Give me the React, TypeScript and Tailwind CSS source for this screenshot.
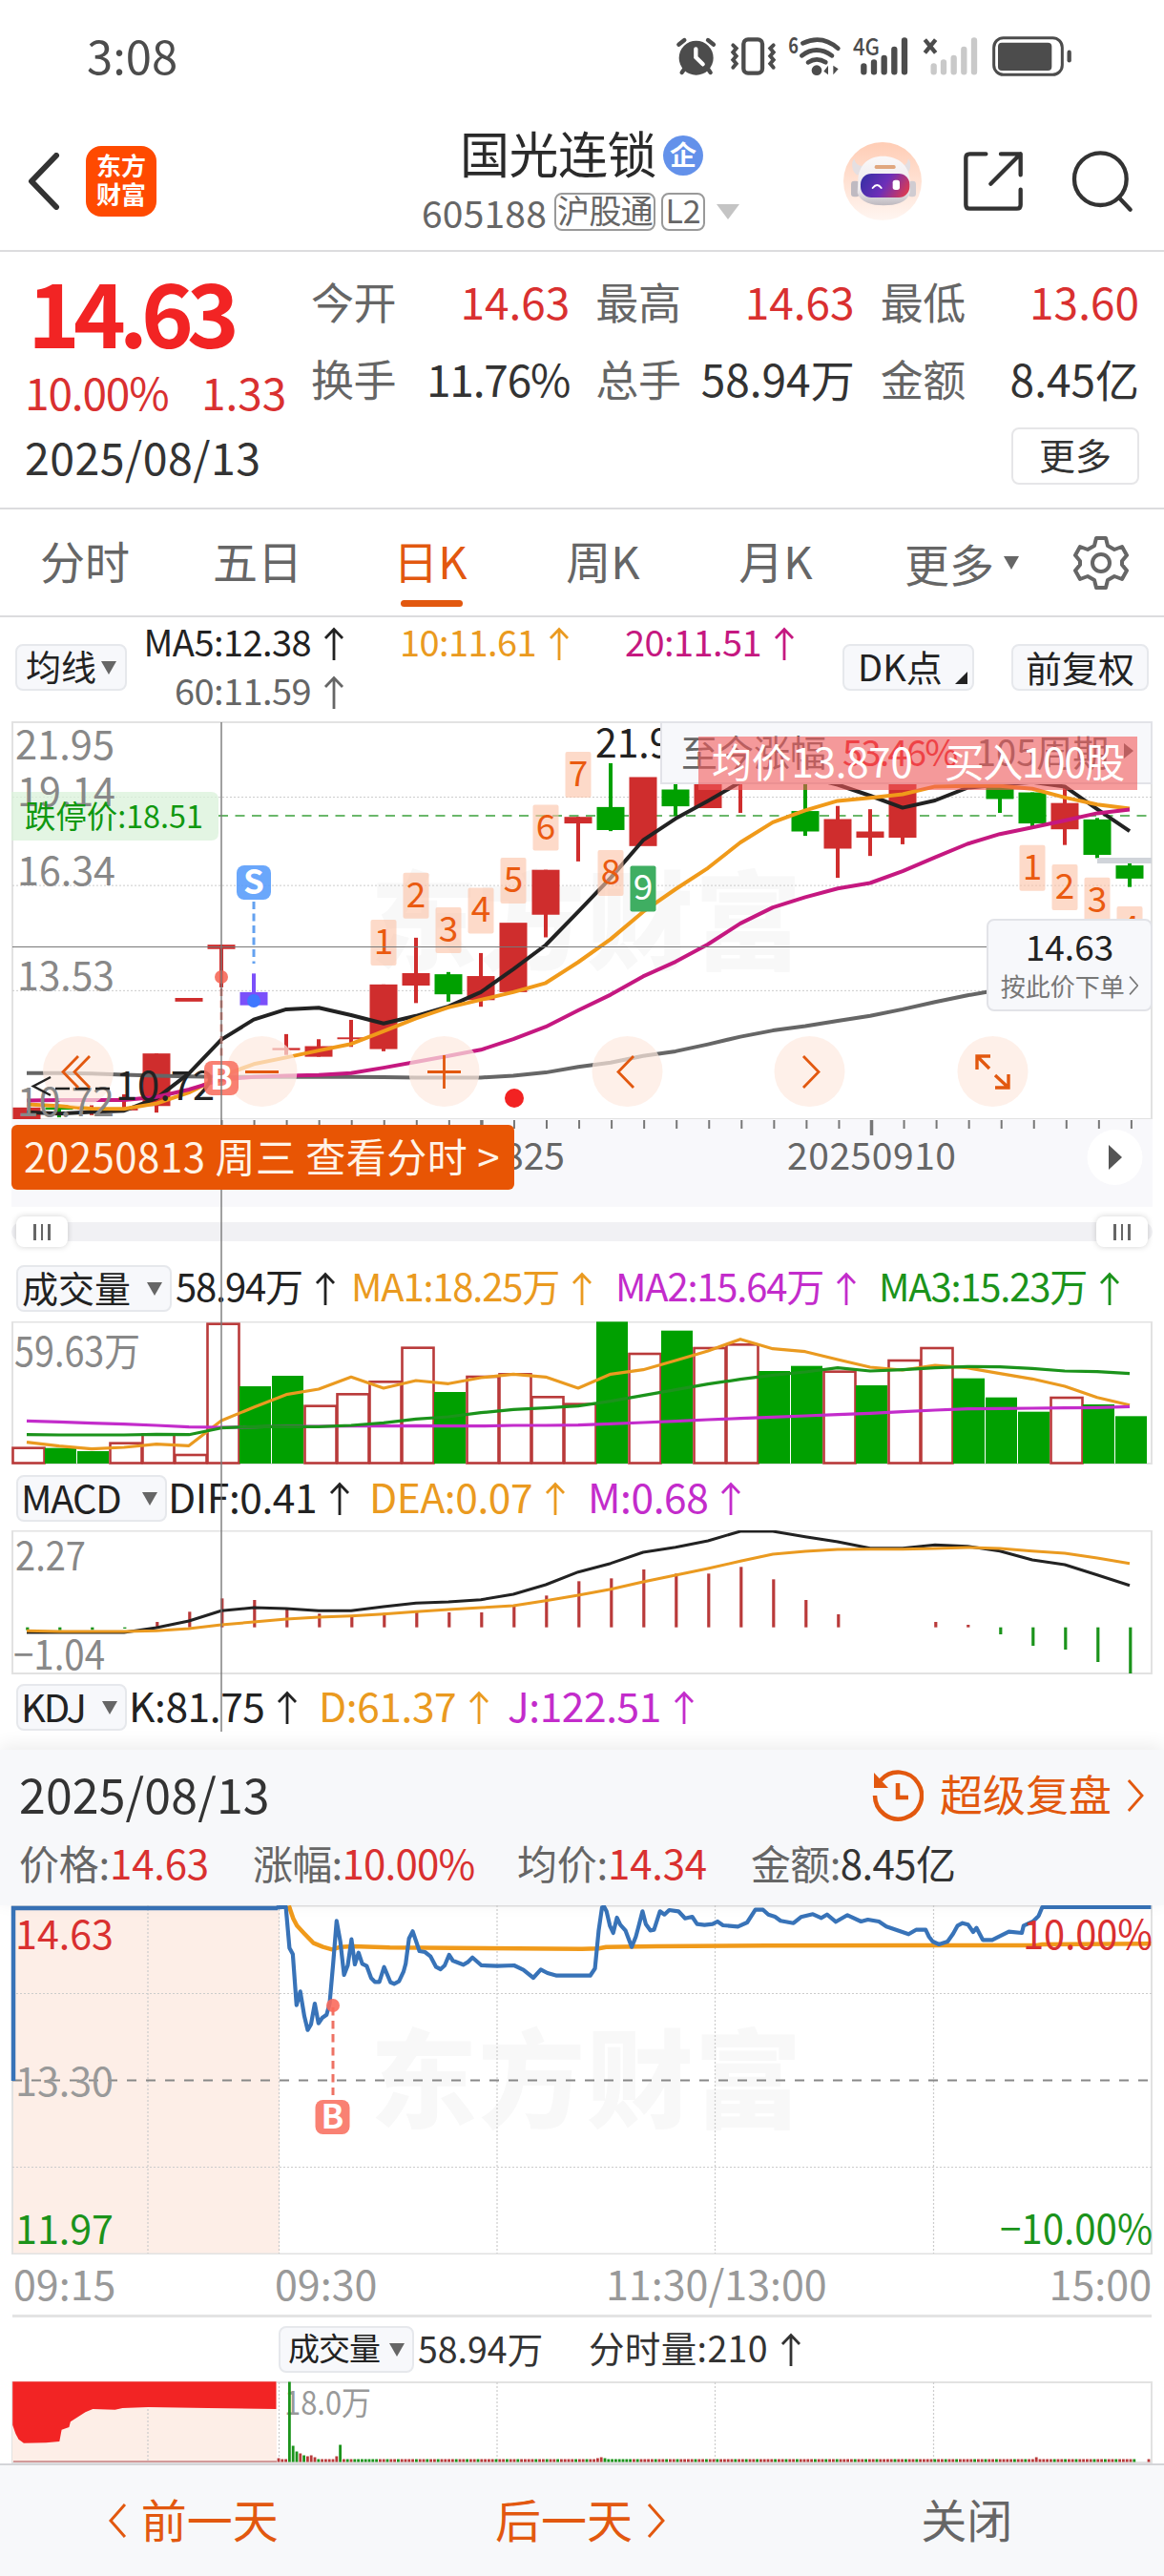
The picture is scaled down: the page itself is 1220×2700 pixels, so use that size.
import type { ReactNode } from "react";
import clsx from "clsx";

type Point = [number, number];

interface Candle {
  i: number;
  color: string;
  top: number;
  bottom: number;
  high?: number;
  low?: number;
}

const RED = "#cf2d2d";
const GREEN = "#00a000";
const UP = "#b93a3a";
const ORANGE = "#ea9a20";
const MAGENTA = "#c51880";
const PURPLE = "#c32ccb";
const ACCENT = "#e2580f";

const STEP = 34;
const slotX = (i: number) => 28 + i * STEP;

// price pane rows -> page pixels
const priceY = (v: number) => 640 + v / 2.6133;
// lower panes share one scale
const paneY = (v: number) => 1360 + v / 3;

const toPath = (points: Point[]) =>
  points
    .map(([x, y], n) => `${n ? "L" : "M"}${x.toFixed(1)} ${y.toFixed(1)}`)
    .join("");

const series = (values: number[], scale: (v: number) => number) =>
  toPath(values.map((v, i) => [slotX(i), scale(v)]));

const candles: Candle[] = [
  { i: 0, color: RED, top: 1361, bottom: 1393 },
  { i: 1, color: GREEN, top: 1361, bottom: 1367, high: 1361, low: 1388 },
  { i: 2, color: RED, top: 1362, bottom: 1367, high: 1355, low: 1382 },
  { i: 3, color: RED, top: 1364, bottom: 1369, high: 1325, low: 1370 },
  { i: 4, color: RED, top: 1213, bottom: 1357, high: 1213, low: 1375 },
  { i: 5, color: RED, top: 1061, bottom: 1071 },
  { i: 6, color: RED, top: 915, bottom: 927, high: 915, low: 1032 },
  { i: 7, color: "#7b50fa", top: 1045, bottom: 1081, high: 994, low: 1081 },
  { i: 8, color: RED, top: 1198, bottom: 1204, high: 1160, low: 1217 },
  { i: 9, color: RED, top: 1193, bottom: 1222, high: 1174, low: 1222 },
  { i: 10, color: RED, top: 1169, bottom: 1174, high: 1121, low: 1195 },
  { i: 11, color: RED, top: 1024, bottom: 1201, high: 1024, low: 1207 },
  { i: 12, color: RED, top: 993, bottom: 1027, high: 896, low: 1075 },
  { i: 13, color: GREEN, top: 996, bottom: 1051, high: 990, low: 1071 },
  { i: 14, color: RED, top: 1001, bottom: 1067, high: 938, low: 1085 },
  { i: 15, color: RED, top: 855, bottom: 1045 },
  { i: 16, color: RED, top: 710, bottom: 833, high: 710, low: 895 },
  { i: 17, color: RED, top: 565, bottom: 583, high: 565, low: 687 },
  { i: 18, color: GREEN, top: 538, bottom: 601, high: 418, low: 604 },
  { i: 19, color: RED, top: 456, bottom: 645 },
  { i: 20, color: GREEN, top: 490, bottom: 536, high: 440, low: 562 },
  { i: 21, color: RED, top: 440, bottom: 541 },
  { i: 22, color: RED, top: 400, bottom: 440, high: 390, low: 554 },
  { i: 24, color: GREEN, top: 549, bottom: 605, high: 440, low: 617 },
  { i: 25, color: RED, top: 571, bottom: 652, high: 535, low: 732 },
  { i: 26, color: RED, top: 605, bottom: 622, high: 544, low: 672 },
  { i: 27, color: RED, top: 440, bottom: 622, high: 440, low: 640 },
  { i: 30, color: GREEN, top: 460, bottom: 516, high: 440, low: 554 },
  { i: 31, color: GREEN, top: 498, bottom: 583, high: 498, low: 592 },
  { i: 32, color: RED, top: 527, bottom: 599, high: 480, low: 642 },
  { i: 33, color: GREEN, top: 572, bottom: 669, high: 568, low: 678 },
  { i: 34, color: GREEN, top: 698, bottom: 734, high: 692, low: 757 },
];

const ma5 = [
  1374, 1378, 1373, 1370, 1336, 1268, 1175, 1120, 1092, 1088, 1108, 1131, 1110,
  1084, 1045, 982, 916, 825, 732, 629, 570, 521, 470, 450, 455, 477, 507, 540,
  520, 485, 477, 470, 482, 544, 604,
];
const ma10 = [
  1352, 1357, 1364, 1365, 1350, 1320, 1275, 1242, 1224, 1205, 1187, 1152, 1117,
  1087, 1066, 1045, 1020, 963, 900, 825, 763, 705, 635, 580, 547, 521, 513, 503,
  482, 480, 480, 488, 512, 531, 542,
];
const ma20 = [
  1342, 1341, 1341, 1341, 1332, 1312, 1285, 1277, 1274, 1272, 1267, 1252, 1236,
  1220, 1203, 1174, 1140, 1095, 1052, 1002, 962, 914, 857, 813, 785, 761, 746,
  714, 676, 639, 612, 594, 575, 555, 545,
];
const ma60 = [
  1267, 1267, 1268, 1271, 1274, 1276, 1277, 1277, 1277, 1277, 1277, 1278, 1279,
  1279, 1279, 1274, 1265, 1250, 1238, 1220, 1207, 1188, 1167, 1150, 1138, 1124,
  1110, 1092, 1072, 1054, 1038,
];

const counts: { i: number; y: number; label: string; done?: boolean }[] = [
  { i: 11, y: 847, label: "1" },
  { i: 12, y: 718, label: "2" },
  { i: 13, y: 813, label: "3" },
  { i: 14, y: 759, label: "4" },
  { i: 15, y: 677, label: "5" },
  { i: 16, y: 532, label: "6" },
  { i: 17, y: 387, label: "7" },
  { i: 18, y: 656, label: "8" },
  { i: 19, y: 699, label: "9", done: true },
  { i: 31, y: 642, label: "1" },
  { i: 32, y: 695, label: "2" },
  { i: 33, y: 731, label: "3" },
  { i: 34, y: 810, label: "4" },
];

// negative = falling day
const volumes = [
  470, -473, -483, 455, 427, 492, 80, -279, -246, 338, 301, 262, 155, -297, 246,
  238, 310, 332, -76, 174, -104, 156, 145, -231, -215, 230, -276, 195, 156,
  -254, -314, -359, 312, -336, -373,
];
const volMa1 = [
  455, 467, 476, 471, 461, 466, 387, 345, 305, 288, 250, 285, 261, 271, 252,
  241, 250, 285, 241, 227, 198, 168, 131, 161, 170, 195, 219, 228, 213, 221,
  239, 256, 279, 314, 338,
];
const volMa2 = [
  388, 391, 395, 398, 402, 407, 408, 407, 405, 405, 404, 404, 403, 404, 404,
  402, 402, 401, 397, 393, 389, 384, 380, 376, 372, 368, 364, 359, 354, 350,
  349, 348, 347, 346, 343,
];
const volMa3 = [
  431, 432, 432, 432, 430, 431, 410, 406, 406, 406, 402, 394, 382, 375, 362,
  352, 347, 341, 326, 308, 290, 272, 257, 244, 234, 221, 231, 227, 221, 217,
  218, 223, 231, 233, 239,
];

const dif = [
  1053, 1053, 1053, 1053, 1038, 1017, 985, 975, 978, 985, 985, 972, 961, 957,
  950, 933, 903, 863, 836, 801, 785, 765, 735, 735, 752, 768, 788, 788, 778,
  782, 797, 825, 840, 872, 905,
];
const dea = [
  1048, 1050, 1050, 1050, 1048, 1041, 1029, 1020, 1011, 1005, 1001, 995, 988,
  981, 975, 969, 953, 936, 917, 894, 873, 852, 829, 807, 798, 792, 791, 791,
  789, 786, 789, 797, 804, 819, 836,
];
const macdBars = [
  1046, 1046, 1045, 1041, 1020, 988, 946, 951, 978, 994, 1004, 992, 985, 990,
  990, 972, 937, 892, 883, 855, 868, 868, 847, 886, 951, 996, 1037, 1037, 1020,
  1029, 1059, 1095, 1107, 1146, 1182,
];

const intraday = (points: Point[]) =>
  toPath(points.map(([x, y]) => [x / 2.5705, 1980 + y / 3]));

const intradayPrice: Point[] = [
  [745, 58], [770, 56], [780, 185], [789, 205], [799, 365], [809, 322],
  [820, 400], [829, 443], [838, 425], [848, 360], [858, 422], [868, 405],
  [880, 395], [888, 360], [898, 230], [907, 100], [917, 165], [927, 270],
  [937, 240], [947, 158], [956, 237], [966, 200], [976, 235], [988, 242],
  [1000, 280], [1010, 292], [1022, 292], [1035, 245], [1052, 293], [1062, 298],
  [1075, 290], [1087, 260], [1093, 235], [1102, 155], [1112, 133], [1130, 195],
  [1145, 198], [1160, 212], [1175, 245], [1187, 252], [1198, 240], [1210, 207],
  [1220, 225], [1248, 238], [1260, 230], [1273, 215], [1297, 240], [1340, 242],
  [1385, 240], [1410, 254], [1437, 279], [1457, 253], [1475, 264], [1500, 272],
  [1590, 272], [1603, 250], [1613, 130], [1622, 58], [1628, 56], [1634, 70],
  [1643, 115], [1652, 138], [1662, 90], [1671, 112], [1685, 130], [1702, 182],
  [1713, 150], [1720, 120], [1731, 70], [1740, 110], [1752, 130], [1762, 128],
  [1778, 70], [1790, 80], [1803, 66], [1828, 70], [1846, 92], [1865, 87],
  [1878, 110], [1898, 113], [1920, 110], [1933, 102], [1948, 114], [1988, 118],
  [2013, 105], [2035, 65], [2056, 65], [2070, 80], [2088, 87], [2103, 100],
  [2138, 107], [2158, 88], [2190, 79], [2213, 91], [2228, 80], [2252, 103],
  [2283, 82], [2320, 102], [2338, 96], [2368, 102], [2388, 118], [2448, 142],
  [2468, 128], [2494, 128], [2503, 150], [2513, 165], [2530, 174], [2553, 165],
  [2568, 140], [2580, 115], [2593, 107], [2608, 112], [2622, 135], [2631, 122],
  [2648, 160], [2673, 160], [2718, 134], [2753, 138], [2758, 115], [2783, 102],
  [2798, 85], [2808, 57], [3101, 57],
];
const intradayAvg: Point[] = [
  [778, 52], [790, 92], [800, 115], [820, 140], [845, 170], [870, 182],
  [895, 190], [917, 182], [950, 180], [1050, 184], [1568, 188], [1613, 187],
  [1633, 182], [1768, 180], [2068, 178], [2468, 177], [2793, 177], [2808, 174],
  [3101, 172],
];

const auction: Point[] = [
  [17, 409], [17, 545], [21, 572], [25, 590], [32, 602], [62, 601], [80, 597],
  [83, 560], [93, 552], [95, 535], [105, 520], [115, 505], [125, 495],
  [155, 497], [165, 492], [200, 489], [280, 492], [372, 495], [372, 409],
];

const ticks = Array.from({ length: 32 }, (_, n) => n);

// minute volume: the open is heavy, the rest of the day stays near the floor
const spikes: Record<number, [number, string]> = {
  0: [4, UP], 3: [84, "#1b931b"], 4: [17, "#1b931b"], 5: [11, "#1b931b"],
  6: [9, UP], 7: [7, "#1b931b"], 8: [6, UP], 9: [7, UP], 10: [5, UP],
  16: [6, UP], 17: [18, "#1b931b"], 88: [4, UP], 89: [5, UP], 90: [4, "#1b931b"],
  209: [5, UP],
};
const minutes = Array.from({ length: 241 }, (_, n) => {
  const green = (n > 20 && n < 28) || (n > 90 && n < 98) || (n * 7) % 11 < 3;
  const [h, color] = spikes[n] ?? [3, green ? "#1b931b" : UP];
  return { x: 292 + n * 3.8, h, color };
}).filter((_, n) => n < 237 || n === 240);

function Arrow() {
  return (
    <svg width="22" height="36" viewBox="0 0 22 36" className="ml-[13px] shrink-0">
      <path
        d="M11 35V2M2 12 11 2.5 20 12"
        fill="none"
        stroke="currentColor"
        strokeWidth="2.8"
      />
    </svg>
  );
}

function Chevron({ left = false, h = 36 }: { left?: boolean; h?: number }) {
  return (
    <svg width={h / 1.9} height={h} viewBox="0 0 19 36" className="shrink-0">
      <path
        d={left ? "M17 1 2 18 17 35" : "M2 1 17 18 2 35"}
        fill="none"
        stroke="currentColor"
        strokeWidth="3"
      />
    </svg>
  );
}

function Triangle({ className }: { className?: string }) {
  return (
    <svg width="16" height="14" viewBox="0 0 16 14" className={className}>
      <path d="M0 0H16L8 14Z" fill="currentColor" />
    </svg>
  );
}

function Tag({ className, children }: { className?: string; children: ReactNode }) {
  return (
    <div
      className={clsx(
        "flex h-[49px] shrink-0 items-center justify-between rounded-lg border-2 border-[#e6e8ec] bg-[#f7f8fb] leading-none text-[#222]",
        className
      )}
    >
      {children}
    </div>
  );
}

function Reading({ className, children }: { className?: string; children: ReactNode }) {
  return (
    <div className={clsx("flex shrink-0 items-center whitespace-nowrap", className)}>
      <span className="pb-1.5">{children}</span>
      <Arrow />
    </div>
  );
}

function StatusBar() {
  return (
    <div className="flex h-[118px] items-start justify-between text-[#4c4c4c]">
      <div className="pt-[32px] pl-[91px] text-[49px] leading-[50px]">3:08</div>
      <svg width="522" height="60" viewBox="0 0 1566 180" className="mt-6">
        <g fill="none" stroke="currentColor" strokeLinecap="round">
          <circle cx="95" cy="110" r="54" fill="currentColor" stroke="none" />
          <path d="M40 68 58 54M150 68 132 54M58 145 50 156M132 145 140 156" strokeWidth="13" />
          <path d="M94 82V108L116 130" stroke="#fff" strokeWidth="13" />
          <rect x="244" y="52" width="59" height="106" rx="14" strokeWidth="13" />
          <path
            d="M211 70 221 80 211 92 221 104 211 116 221 128 211 140M338 70 328 80 338 92 328 104 338 116 328 128 338 140"
            strokeWidth="12"
          />
          <path
            d="M430 64Q490 35 541 80M427 103Q473 68 522 103M447 124Q474 106 502 124"
            strokeWidth="14"
          />
          <circle cx="474" cy="149" r="16" fill="currentColor" stroke="none" />
          <path d="M510 134V163L496 152ZM526 134 542 145 526 163Z" fill="currentColor" stroke="none" />
          <path d="M622 136V154M654 124V154M686 111V154M718 84V154M750 55V154" strokeWidth="19" />
          <path
            d="M842 136V154M873 124V154M905 111V154M937 84V154M969 55V154"
            stroke="#c9c9c9"
            strokeWidth="19"
          />
          <path d="M814 53 848 94M848 53 814 94" strokeWidth="13" strokeLinecap="butt" />
          <rect x="1031" y="47" width="215" height="116" rx="30" strokeWidth="9" />
          <rect x="1044" y="62" width="169" height="88" rx="12" fill="currentColor" stroke="none" />
          <path d="M1268 92V118" strokeWidth="13" />
        </g>
        <text x="385" y="96" fontSize="68" fontWeight="700" fill="currentColor" textLength="32" lengthAdjust="spacingAndGlyphs">
          6
        </text>
        <text x="588" y="103" fontSize="74" fontWeight="500" fill="currentColor" textLength="84" lengthAdjust="spacingAndGlyphs">
          4G
        </text>
      </svg>
    </div>
  );
}

function Header() {
  return (
    <div className="flex h-[146px] items-center border-b-2 border-[#dcdcde]">
      <svg width="34" height="60" viewBox="0 0 34 60" className="ml-[29px]">
        <path d="M30 3 4 30 30 57" fill="none" stroke="#333" strokeWidth="6" strokeLinecap="round" strokeLinejoin="round" />
      </svg>
      <div className="ml-[27px] flex h-[74px] w-[74px] flex-col items-center justify-center rounded-2xl bg-[#ff4a00] pb-1 text-[26px] leading-[30px] font-bold text-white">
        <span>东方</span>
        <span>财富</span>
      </div>
      <div className="ml-[278px] flex w-[337px] flex-col">
        <div className="flex items-center pl-[40px]">
          <span className="text-[52px] leading-[60px] tracking-[-0.01em] text-[#2a2a2a]">国光连锁</span>
          <span className="mt-1.5 ml-[7px] flex h-[42px] w-[42px] items-center justify-center rounded-full bg-[#6391ea] pb-1 text-[28px] leading-none font-bold text-white">
            企
          </span>
        </div>
        <div className="mt-1 flex items-center text-[#666]">
          <span className="text-[39px] leading-[56px] tracking-[0.005em]">605188</span>
          <span className="ml-2 flex h-10 w-[106px] items-center justify-center rounded-lg border-2 border-[#999] pb-1 text-[34px] leading-none tracking-[-0.02em]">
            沪股通
          </span>
          <span className="ml-1.5 flex h-10 w-[46px] items-center justify-center rounded-lg border-2 border-[#999] pb-1 text-[34px] leading-none">
            L2
          </span>
          <svg width="24" height="16" viewBox="0 0 24 16" className="ml-3">
            <path d="M0 0H24L12 16Z" fill="#c4c4c4" />
          </svg>
        </div>
      </div>
      <svg width="82" height="82" viewBox="0 0 246 246" className="ml-[105px]">
        <defs>
          <linearGradient id="halo" x1="0" y1="0" x2="0" y2="1">
            <stop offset="0" stopColor="#ffcdb5" />
            <stop offset="1" stopColor="#fff6f1" />
          </linearGradient>
          <linearGradient id="shell" x1="0" y1="0" x2="0" y2="1">
            <stop offset="0" stopColor="#faf8f9" />
            <stop offset="0.7" stopColor="#ece9ec" />
            <stop offset="1" stopColor="#bdb8be" />
          </linearGradient>
          <linearGradient id="visor" x1="0" y1="0.3" x2="1" y2="0.6">
            <stop offset="0" stopColor="#3a2fa6" />
            <stop offset="0.5" stopColor="#6d2fb8" />
            <stop offset="1" stopColor="#d83a55" />
          </linearGradient>
        </defs>
        <circle cx="123" cy="123" r="123" fill="url(#halo)" />
        <rect x="24" y="122" width="26" height="50" rx="10" fill="#bfbac1" />
        <rect x="204" y="122" width="24" height="50" rx="10" fill="#d0ccd1" />
        <path d="M28 62Q24 92 44 104L70 74Q40 80 34 52ZM210 62Q214 92 194 104L172 74Q200 80 204 52Z" fill="#e4dfe2" />
        <path d="M124 44C76 44 48 74 46 118L44 160C54 190 90 199 126 199C166 199 200 190 209 160V118C206 72 172 44 124 44Z" fill="url(#shell)" />
        <rect x="54" y="99" width="154" height="75" rx="34" fill="url(#visor)" />
        <rect x="98" y="72" width="66" height="12" rx="5" fill="#e0a77f" />
        <path d="M92 144Q106 126 119 144" fill="none" stroke="#fff" strokeWidth="6" strokeLinecap="round" />
        <rect x="155" y="119" width="22" height="31" rx="8" fill="#fff" />
      </svg>
      <svg width="64" height="64" viewBox="0 0 192 192" className="ml-[43px]">
        <g fill="none" stroke="#333" strokeWidth="13" strokeLinecap="round" strokeLinejoin="round">
          <path d="M73 10H22Q10 10 10 22V170Q10 182 22 182H170Q182 182 182 170V122" />
          <path d="M120 10H182V76M182 10 88 104" />
        </g>
      </svg>
      <svg width="66" height="66" viewBox="0 0 198 198" className="ml-[49px]">
        <g fill="none" stroke="#333" strokeWidth="13" strokeLinecap="round">
          <circle cx="94" cy="92" r="82" />
          <path d="M152 150 188 188" />
        </g>
      </svg>
    </div>
  );
}

const quoteCells = [
  { label: "今开", value: "14.63", red: true },
  { label: "最高", value: "14.63", red: true },
  { label: "最低", value: "13.60", red: true },
  { label: "换手", value: "11.76%" },
  { label: "总手", value: "58.94万" },
  { label: "金额", value: "8.45亿" },
];

function Quote() {
  return (
    <div className="h-[270px] border-b-2 border-[#dcdcde]">
      <div className="flex h-[178px]">
        <div className="w-[326px] shrink-0 pl-[29px]">
          <div className="mt-[13px] text-[93px] leading-[96px] font-bold tracking-[-0.075em] text-[#f22424]">
            14.63
          </div>
          <div className="-ml-[3px] mt-[10px] flex text-[46px] leading-[54px] tracking-[-0.025em] text-[#d93030]">
            <span className="w-[185px]">10.00%</span>
            <span className="tracking-normal">1.33</span>
          </div>
        </div>
        <div className="grid h-[162px] w-[868px] grid-cols-3 gap-x-[27px] pt-[11px] leading-[81px]">
          {quoteCells.map((c) => (
            <div key={c.label} className="flex justify-between whitespace-nowrap">
              <span className="text-[45px] tracking-[-0.01em] text-[#666]">{c.label}</span>
              <span
                className={clsx(
                  "text-[46px]",
                  c.red ? "text-[#d93030]" : "text-[#333]",
                  c.value.endsWith("%") && "tracking-[-0.025em]"
                )}
              >
                {c.value}
              </span>
            </div>
          ))}
        </div>
      </div>
      <div className="flex items-center justify-between pr-[26px] pl-[26px]">
        <span className="text-[46.5px] leading-[72px] tracking-[0.01em] text-[#333]">2025/08/13</span>
        <span className="flex h-[60px] w-[134px] items-center justify-center rounded-lg border-2 border-[#e6e6e8] pb-1 text-[38px] leading-none text-[#333]">
          更多
        </span>
      </div>
    </div>
  );
}

function Tabs() {
  const tabs = ["分时", "五日", "日K", "周K", "月K"];
  return (
    <div className="flex h-[113px] items-center border-b-2 border-[#dcdcde] text-[47px] leading-none text-[#666]">
      {tabs.map((t) => (
        <div
          key={t}
          className={clsx(
            "flex h-full w-[181px] flex-col items-center justify-end",
            t === "日K" && "text-[#e2580f]"
          )}
        >
          <span className="pr-[3px]">{t}</span>
          <span
            className={clsx(
              "mt-[19px] mb-[9px] h-[7px] w-[65px] rounded-full",
              t === "日K" ? "bg-[#e2580f]" : "bg-transparent"
            )}
          />
        </div>
      ))}
      <span className="ml-[43px]">更多</span>
      <Triangle className="ml-2.5" />
      <svg width="58" height="58" viewBox="0 0 58 58" className="ml-[57px]">
        <g fill="none" stroke="#666" strokeWidth="4" strokeLinejoin="round">
          <path d="M24 3H34L36 11 43 15 51 12 56 21 51 27V31L56 37 51 46 43 43 36 47 34 55H24L22 47 15 43 7 46 2 37 7 31V27L2 21 7 12 15 15 22 11Z" />
          <circle cx="29" cy="29" r="9" />
        </g>
      </svg>
    </div>
  );
}

function MaRow() {
  return (
    <div className="flex h-[109px] text-[37px] leading-none">
      <Tag className="mt-[28px] ml-4 w-[117px] px-[9px]">
        <span className="pb-0.5">均线</span>
        <Triangle className="text-[#666]" />
      </Tag>
      <div className="-ml-[8px] grid h-[104px] w-[708px] grid-cols-3 grid-rows-2 pt-[3px] text-[38px] tracking-[-0.015em]">
        <Reading className="justify-end text-[#222]">MA5:12.38</Reading>
        <Reading className="justify-end text-[#ea9a20]">10:11.61</Reading>
        <Reading className="justify-end text-[#c51880]">20:11.51</Reading>
        <Reading className="justify-end text-[#666]">60:11.59</Reading>
      </div>
      <Tag className="mt-[28px] ml-[50px] w-[138px] items-end! pr-[5px] pl-[14px]">
        <span className="self-center pb-1 text-[38px]">DK点</span>
        <svg width="13" height="13" viewBox="0 0 13 13" className="mb-[5px]">
          <path d="M13 0V13H0Z" fill="#222" />
        </svg>
      </Tag>
      <Tag className="mt-[28px] ml-[39px] w-[144px] justify-center! pb-0.5 text-[38px]">前复权</Tag>
    </div>
  );
}

function Watermark({ y }: { y: number }) {
  return (
    <text x="388" y={y} fontSize="112" fontWeight="900" fill="#f8f8f8" textLength="452">
      东方财富
    </text>
  );
}

function TradeMark({ x, y, label, fill }: { x: number; y: number; label: string; fill: string }) {
  return (
    <g>
      <rect x={x - 18} y={y} width="36" height="36" rx="8" fill={fill} fillOpacity="0.88" />
      <text x={x} y={y + 30} fontSize="35" fontWeight="700" fill="#fff" textAnchor="middle">
        {label}
      </text>
    </g>
  );
}

function AxisText({ x, y, w, fill = "#888", children }: { x: number; y: number; w: number; fill?: string; children: string }) {
  return (
    <text x={x} y={y} fontSize="42" fill={fill} textLength={w} lengthAdjust="spacingAndGlyphs">
      {children}
    </text>
  );
}

function PriceChart() {
  return (
    <div className="relative h-[417px]">
      <svg width="1220" height="417" viewBox="0 756 1220 417" className="block">
        <Watermark y={1008} />
        <rect x="13" y="757" width="1194" height="416" fill="none" stroke="#e2e2e2" strokeWidth="2" />
        {[511, 753, 1041].map((v) => (
          <path key={v} d={`M13 ${priceY(v)}H1207`} stroke="#ccc" strokeWidth="1" strokeDasharray="2 2" />
        ))}
        <path d="M12 830H221Q229 830 229 838V873Q229 881 221 881H12Z" fill="#d9f1da" fillOpacity="0.75" />
        <AxisText x={16} y={796} w={104}>21.95</AxisText>
        <AxisText x={18} y={845} w={103}>19.14</AxisText>
        <AxisText x={18} y={928} w={103}>16.34</AxisText>
        <AxisText x={18} y={1038} w={102}>13.53</AxisText>
        <text x="26" y="868" fontSize="33" fill="#109810" textLength="187" lengthAdjust="spacingAndGlyphs">
          跌停价:18.51
        </text>
        <path d="M229 855H1207" stroke="#3aa03a" strokeWidth="1.5" strokeDasharray="10 7.5" />
        {candles.map((c) => {
          const x = slotX(c.i);
          return (
            <g key={c.i} fill={c.color}>
              <rect
                x={x - 14.5}
                y={priceY(c.top)}
                width="29"
                height={(c.bottom - c.top) / 2.6133}
              />
              {c.high !== undefined && c.low !== undefined && (
                <rect
                  x={x - 2}
                  y={priceY(c.high)}
                  width="4"
                  height={(c.low - c.high) / 2.6133}
                />
              )}
            </g>
          );
        })}
        <rect x="1150" y="899" width="57" height="6" fill="#d0d4da" />
        <g fill="none" strokeWidth="4" strokeLinejoin="round">
          <path d={series(ma60, priceY)} stroke="#666" />
          <path d={series(ma5, priceY)} stroke="#222" />
          <path d={series(ma10, priceY)} stroke="#f09a1a" />
          <path d={series(ma20, priceY)} stroke={MAGENTA} />
        </g>
        {counts.map((c) => (
          <g key={`${c.i}-${c.label}`}>
            <rect
              x={slotX(c.i) - 13.5}
              y={priceY(c.y)}
              width="27"
              height="48"
              rx="2"
              fill={c.done ? "#3fae62" : "#fbc3a8"}
              fillOpacity={c.done ? 1 : 0.62}
            />
            <text
              x={slotX(c.i)}
              y={priceY(c.y) + 36}
              fontSize="37"
              fill={c.done ? "#fff" : "#ea5a10"}
              textAnchor="middle"
            >
              {c.label}
            </text>
          </g>
        ))}
        <path d="M13 992.5H1035" stroke="#777" strokeWidth="1.2" />
        <path d="M266 945V1010" stroke="#64a2f0" strokeWidth="3" strokeDasharray="8 4.5" />
        <TradeMark x={266} y={907} label="S" fill="#559bfa" />
        <circle cx="266" cy="1049" r="7" fill="#3f78ff" />
        <circle cx="232" cy="1024" r="7" fill="#f5604f" fillOpacity="0.85" />
        <path d="M232 1036V1111" stroke="#dd5545" strokeWidth="2.5" strokeDasharray="8 4.5" />

        <g fill="#fdeadf" fillOpacity="0.7">
          {[82, 274.5, 465.5, 657.5, 848.5, 1040.5].map((cx) => (
            <circle key={cx} cx={cx} cy="1123" r="37" />
          ))}
        </g>
        <AxisText x={18} y={1170} w={102}>10.72</AxisText>
        <AxisText x={121} y={1153} w={104} fill="#222">10.72</AxisText>
        <path d="M53 1129 35 1138.5 53 1148M58 1141H73M79 1141H94M100 1141H115" fill="none" stroke="#222" strokeWidth="2.5" />
        <g fill="none" stroke={ACCENT} strokeWidth="2.8">
          <path d="M82 1107 66 1123.500 82 1140M94 1107 78 1123.500 94 1140" />
          <path d="M257 1123.500H292M448 1123.500H483M465.500 1106V1141" />
          <path d="M664 1107 648 1123.500 664 1140M842 1107 858 1123.500 842 1140" />
          <path d="M1038 1107H1024V1121M1024 1107 1037 1120M1043 1127 1057 1140M1057 1126V1140H1043" strokeWidth="3.4" />
        </g>
        <TradeMark x={232} y={1112} label="B" fill="#f87060" />
        <circle cx="539" cy="1151" r="10" fill="#f22222" />
        <AxisText x={624} y={794} w={102} fill="#222">21.95</AxisText>
      </svg>

      <div className="absolute top-0 left-[692px] flex h-[66px] w-[516px] items-center border-2 border-[#e2e3e8] bg-[#f7f8fb] pb-1 pl-5 text-[38px] leading-none whitespace-nowrap text-[#666]">
        <span className="w-[169px]">至今涨幅</span>
        <span className="w-[140px] tracking-[-0.045em] text-[#e8202a]">53.46%</span>
        <span>105周期</span>
        <span className="ml-4 border-y-8 border-l-[10px] border-y-transparent border-l-[#666]" />
      </div>
      <div className="absolute top-[16px] left-[732px] flex h-[56px] w-[460px] items-center justify-between bg-[#f25a5a]/60 px-[14px] pb-[7px] text-[42px] leading-none whitespace-nowrap text-white">
        <span className="tracking-[-0.005em]">均价13.870</span>
        <span className="tracking-[-0.03em]">买入100股</span>
      </div>
      <div className="absolute top-[207px] left-[1034px] flex h-[97px] w-[174px] flex-col items-center rounded-lg border-2 border-[#e2e3e8] bg-[#f7f8fb] pt-[4px]">
        <span className="text-[37px] leading-[44px] text-[#222]">14.63</span>
        <span className="flex items-center text-[26px] leading-[40px] whitespace-nowrap text-[#777]">
          按此价下单
          <span className="ml-1">
            <Chevron h={20} />
          </span>
        </span>
      </div>
    </div>
  );
}

function TimeAxis() {
  return (
    <div className="relative mx-3 h-[92px] bg-[#f8f8fb]">
      <svg width="1196" height="92" viewBox="12 1173 1196 92" className="block">
        {ticks.map((n) => {
          const strong = n === 8 || n === 20;
          return (
            <path
              key={n}
              d={`M${232.5 + n * 34.05} 1174V${n === 20 ? 1190 : 1183}`}
              stroke={n === 31 ? "#aaa" : "#777"}
              strokeWidth={strong ? 3.5 : 2}
            />
          );
        })}
        <text x="592" y="1226" fontSize="39" fill="#666" textAnchor="end">
          20250825
        </text>
        <text x="825" y="1226" fontSize="39" fill="#666" textLength="177">
          20250910
        </text>
        <circle cx="1168.500" cy="1213" r="29" fill="#fff" />
        <path d="M1162 1200V1226L1176 1213Z" fill="#555" />
      </svg>
      <div className="absolute top-[6px] left-0 flex h-[68px] w-[527px] items-center rounded-md bg-[#e85504] pb-1 pl-[13px] text-[42px] leading-none tracking-[0.012em] whitespace-pre text-[#fff3e6]">
        20250813 周三 查看分时 &gt;
      </div>
    </div>
  );
}

function Handle() {
  return (
    <div className="flex h-8 w-[54px] items-center justify-center gap-[5px] rounded-lg bg-white shadow-[0_0_6px_rgba(0,0,0,0.18)]">
      <span className="h-[17px] w-[2.5px] bg-[#666]" />
      <span className="h-[17px] w-[2.5px] bg-[#666]" />
      <span className="h-[17px] w-[2.5px] bg-[#666]" />
    </div>
  );
}

function RangeSlider() {
  return (
    <div className="flex h-[61px] items-center px-3 pb-[9px]">
      <div className="flex h-5 flex-1 items-center justify-between rounded-full bg-[#f1f1f4] px-[5px]">
        <Handle />
        <Handle />
      </div>
    </div>
  );
}

function VolumePane() {
  return (
    <>
      <div className="flex h-[59px] items-start text-[40px] leading-[43px] tracking-[-0.03em]">
        <Tag className="ml-[17px] w-[163px] pr-2 pl-[4px]">
          <span className="pb-1 text-[38px] tracking-normal">成交量</span>
          <Triangle className="text-[#666]" />
        </Tag>
        <Reading className="ml-1 w-[184px] text-[#222]">58.94万</Reading>
        <Reading className="w-[277px] text-[#ea9a20]">MA1:18.25万</Reading>
        <Reading className="w-[276px] text-[#c32ccb]">MA2:15.64万</Reading>
        <Reading className="text-[#1b931b]">MA3:15.23万</Reading>
      </div>
      <svg width="1220" height="150" viewBox="0 1385 1220 150" className="block">
        <rect x="13" y="1385.500" width="1194" height="148.500" fill="none" stroke="#e2e2e2" strokeWidth="2" />
        <AxisText x={15} y={1432} w={132}>59.63万</AxisText>
        {volumes.map((v, i) => {
          const x = slotX(i) - 15.5;
          const y = paneY(Math.abs(v));
          return v < 0 ? (
            <rect key={i} x={x + 0.5} y={y} width="33" height={1534 - y} fill={GREEN} />
          ) : (
            <rect key={i} x={x + 1} y={y + 1} width="33" height={1532.5 - y} fill="#fff" stroke={UP} strokeWidth="2.6" />
          );
        })}
        <g fill="none" strokeWidth="3.2" strokeLinejoin="round">
          <path d={series(volMa1, paneY)} stroke={ORANGE} />
          <path d={series(volMa2, paneY)} stroke={PURPLE} />
          <path d={series(volMa3, paneY)} stroke="#1b931b" />
        </g>
      </svg>
    </>
  );
}

function MacdPane() {
  return (
    <>
      <div className="flex h-[69px] items-start pt-[11px] text-[42.5px] leading-[43px] tracking-[-0.01em]">
        <Tag className="ml-[17px] w-[158px] pr-2 pl-[3px]">
          <span className="pb-1 text-[40px] tracking-[-0.03em]">MACD</span>
          <Triangle className="text-[#666]" />
        </Tag>
        <Reading className="ml-px w-[211px] text-[#222]">DIF:0.41</Reading>
        <Reading className="w-[229px] text-[#ea9a20]">DEA:0.07</Reading>
        <Reading className="text-[#c32ccb]">M:0.68</Reading>
      </div>
      <svg width="1220" height="151" viewBox="0 1604 1220 151" className="block">
        <rect x="13" y="1604.500" width="1194" height="149.500" fill="none" stroke="#e2e2e2" strokeWidth="2" />
        <AxisText x={16} y={1646} w={74}>2.27</AxisText>
        <AxisText x={14} y={1750} w={96}>−1.04</AxisText>
        {macdBars.map((v, i) => (
          <path
            key={i}
            d={`M${slotX(i) + 0.8} ${paneY(1037)}V${paneY(v)}`}
            stroke={v > 1037 ? "#1b931b" : UP}
            strokeWidth="3.2"
          />
        ))}
        <g fill="none" strokeWidth="3" strokeLinejoin="round">
          <path d={series(dif, paneY)} stroke="#222" />
          <path d={series(dea, paneY)} stroke={ORANGE} />
        </g>
      </svg>
    </>
  );
}

function KdjRow() {
  return (
    <div className="flex h-[79px] items-start pt-[10px] text-[42.5px] leading-[43px] tracking-[-0.01em]">
      <Tag className="ml-[17px] w-[116px] pr-2 pl-[3px]">
        <span className="pb-1 text-[40px] tracking-[-0.05em]">KDJ</span>
        <Triangle className="text-[#666]" />
      </Tag>
      <Reading className="ml-0.5 w-[199px] text-[#222]">K:81.75</Reading>
      <Reading className="w-[198px] text-[#ea9a20]">D:61.37</Reading>
      <Reading className="text-[#c32ccb]">J:122.51</Reading>
    </div>
  );
}

function ReplayHeader() {
  return (
    <div className="relative h-[163px] bg-[#f7f8fa] shadow-[0_-4px_18px_rgba(0,0,0,0.08)]">
      <div className="flex h-[96px] items-center justify-between pr-[21px] pl-[20px]">
        <span className="pb-1.5 text-[50px] leading-none tracking-[0.003em] text-[#333]">2025/08/13</span>
        <span className="flex items-center text-[45px] leading-none text-[#e2580f]">
          <svg width="54" height="54" viewBox="0 0 54 54" className="mr-[17px]">
            <path d="M3 27A24.500 24.500 0 1 0 9 11" fill="none" stroke="currentColor" strokeWidth="4.500" />
            <path d="M2 3V19H17Z" fill="currentColor" />
            <path d="M27 14V29H38" fill="none" stroke="currentColor" strokeWidth="4.500" />
          </svg>
          <span className="pb-[5px]">超级复盘</span>
          <span className="ml-4">
            <Chevron h={34} />
          </span>
        </span>
      </div>
      <div className="-mt-[2px] flex pl-[20px] text-[42px] leading-[48px] whitespace-nowrap text-[#666]">
        <span className="w-[245px] tracking-[-0.005em]">
          价格:<span className="text-[#d93030]">14.63</span>
        </span>
        <span className="w-[277px] tracking-[-0.018em]">
          涨幅:<span className="text-[#d93030]">10.00%</span>
        </span>
        <span className="w-[245px] tracking-[-0.005em]">
          均价:<span className="text-[#d93030]">14.34</span>
        </span>
        <span className="tracking-[-0.015em]">
          金额:<span className="text-[#333]">8.45亿</span>
        </span>
      </div>
    </div>
  );
}

function IntradayChart() {
  return (
    <svg width="1220" height="366" viewBox="0 1997 1220 366" className="block">
      <Watermark y={2222} />
      <rect x="13" y="1997" width="280" height="365" fill="#fdeee7" />
      <path d="M13 1997.500H1207V2362.500H13Z" fill="none" stroke="#e2e2e2" strokeWidth="2" />
      <path
        d="M13 2089.500H1207M13 2271.500H1207M155 1997V2362M292.500 1997V2362M521 1997V2362M749.500 1997V2362M978.500 1997V2362"
        stroke="#ccc"
        strokeWidth="1.2"
        strokeDasharray="2 2"
      />
      <path d="M13 2180.500H1207" stroke="#888" strokeWidth="2" strokeDasharray="10 10" />
      <path d={intraday(intradayAvg)} fill="none" stroke="#f09a1a" strokeWidth="4.500" strokeLinejoin="round" />
      <path d="M14 2181V2000H291" fill="none" stroke="#3873b8" strokeWidth="4.500" />
      <path d={intraday(intradayPrice)} fill="none" stroke="#3873b8" strokeWidth="4.200" strokeLinejoin="round" />
      <path d="M349 2104V2196" stroke="#ee7264" strokeWidth="3" strokeDasharray="8.500 5.500" />
      <circle cx="349" cy="2102" r="7" fill="#fb6a5c" fillOpacity="0.9" />
      <TradeMark x={348.5} y={2201} label="B" fill="#f87060" />
      <AxisText x={16} y={2043} w={103} fill="#d93030">14.63</AxisText>
      <AxisText x={16} y={2197} w={103} fill="#999">13.30</AxisText>
      <AxisText x={16} y={2352} w={103} fill="#1b931b">11.97</AxisText>
      <AxisText x={1072} y={2043} w={136} fill="#d93030">10.00%</AxisText>
      <AxisText x={1048} y={2352} w={160} fill="#1b931b">−10.00%</AxisText>
    </svg>
  );
}

function MinuteVolume() {
  return (
    <>
      <div className="mx-[13px] flex h-[66px] items-center border-b-3 border-[#e4e4e4] pb-1 text-[43px] leading-none text-[#999]">
        <span className="w-[275px] pl-px">09:15</span>
        <span className="w-[347px]">09:30</span>
        <span>11:30/13:00</span>
        <span className="ml-auto">15:00</span>
      </div>
      <div className="flex h-[67px] items-center text-[37.5px] leading-none text-[#333]">
        <Tag className="ml-[292px] w-[142px] pr-2 pl-2">
          <span className="pb-1 text-[33px] tracking-[-0.03em]">成交量</span>
          <Triangle className="text-[#666]" />
        </Tag>
        <span className="ml-1 w-[179px] pb-1">58.94万</span>
        <Reading className="tracking-[0.01em]">分时量:210</Reading>
      </div>
      <svg width="1220" height="86" viewBox="0 2496 1220 86" className="block">
        <rect x="13" y="2497" width="1194" height="84" fill="none" stroke="#e2e2e2" strokeWidth="2" />
        <rect x="13" y="2497" width="277" height="83" fill="#fdeee7" />
        <path
          d="M155 2497V2581M292.500 2497V2581M521 2497V2581M749.500 2497V2581M978.500 2497V2581"
          stroke="#ccc"
          strokeWidth="1.2"
          strokeDasharray="2 2"
        />
        <path d={toPath(auction.map(([x, y]) => [x / 1.285, 2360 + y / 3]))} fill="#f22424" />
        <path d="M14 2580H290" stroke="#c98080" strokeWidth="1.5" />
        <text x="298" y="2531" fontSize="34" fill="#999" textLength="91" lengthAdjust="spacingAndGlyphs">
          18.0万
        </text>
        {minutes.map((m) => (
          <rect key={m.x} x={m.x - 1.4} y={2580.5 - m.h} width="2.8" height={m.h} fill={m.color} />
        ))}
      </svg>
    </>
  );
}

function Footer() {
  return (
    <div className="grid h-[118px] grid-cols-3 border-t-2 border-[#d4d5d8] bg-[#f7f8fa] pr-1 text-[48px] leading-none">
      <button className="flex items-center justify-center gap-[15px] text-[#e2580f]">
        <Chevron left />
        <span className="pb-1.5">前一天</span>
      </button>
      <button className="flex items-center justify-center gap-[15px] text-[#e2580f]">
        <span className="pb-1.5">后一天</span>
        <Chevron />
      </button>
      <button className="flex items-center justify-center pb-1.5 text-[#666]">关闭</button>
    </div>
  );
}

export default function App() {
  return (
    <div className="h-[2700px] w-[1220px] overflow-hidden bg-white font-['Noto_Sans_CJK_SC',sans-serif]">
      <StatusBar />
      <Header />
      <Quote />
      <Tabs />
      <MaRow />
      <div className="relative">
        <PriceChart />
        <TimeAxis />
        <RangeSlider />
        <VolumePane />
        <MacdPane />
        <KdjRow />
        {/* crosshair, hidden behind the date pill */}
        <div className="absolute top-px left-[231px] h-[422px] w-[2px] bg-[#777]/70" />
        <div className="absolute top-[491px] left-[231px] h-[568px] w-[2px] bg-[#777]/70" />
      </div>
      <ReplayHeader />
      <IntradayChart />
      <MinuteVolume />
      <Footer />
    </div>
  );
}
